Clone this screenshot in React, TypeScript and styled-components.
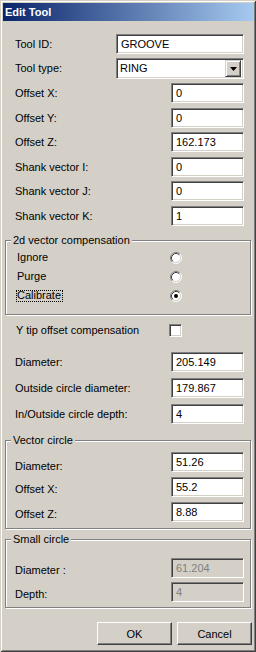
import React from 'react';
import styled, { createGlobalStyle } from 'styled-components';

const GlobalStyle = createGlobalStyle`
  html, body {
    margin: 0;
    padding: 0;
    background: #d4d0c8;
  }
  body {
    font-family: "Liberation Sans", Arial, sans-serif;
    font-size: 11px;
    line-height: 13px;
    color: #000;
  }
`;

const Window = styled.div`
  width: 256px;
  height: 652px;
  box-sizing: border-box;
  padding: 3px 2px 2px 3px;
  background: #d4d0c8;
  box-shadow: inset 1px 1px #d4d0c8, inset -1px -1px #404040, inset 2px 2px #fff,
    inset -2px -2px #808080;
  display: flex;
  flex-direction: column;
`;

const TitleBar = styled.div`
  height: 18px;
  padding-left: 2px;
  display: flex;
  align-items: center;
  background: linear-gradient(to right, #0a246a, #a6caf0);
  color: #fff;
  font-weight: bold;
  font-size: 11px;
`;

const Body = styled.div`
  display: flex;
  flex-direction: column;
  padding: 0 2px;
`;

const Row = styled.div<{ $mt: number; $h?: number; $pl?: number; $pr?: number }>`
  display: flex;
  align-items: center;
  justify-content: space-between;
  margin-top: ${p => p.$mt}px;
  height: ${p => p.$h ?? 20}px;
  padding: 0 ${p => p.$pr ?? 8}px 0 ${p => p.$pl ?? 10}px;
`;

const Label = styled.span<{ $drop?: number }>`
  padding-top: ${p => (p.$drop ?? 0) * 2}px;
  white-space: nowrap;
`;

const Edit = styled.input<{ $w?: number }>`
  box-sizing: border-box;
  width: ${p => p.$w ?? 73}px;
  height: 20px;
  margin: 0;
  padding: 0 0 0 4px;
  border: 1px solid;
  border-color: #808080 #fff #fff #808080;
  box-shadow: inset 1px 1px #404040, inset -1px -1px #d4d0c8;
  background: #fff;
  font: 11px "Liberation Sans", Arial, sans-serif;
  color: #000;
  outline: none;

  &:disabled {
    background: #d4d0c8;
    color: #808080;
    -webkit-text-fill-color: #808080;
    opacity: 1;
  }
`;

const Combo = styled.div`
  box-sizing: border-box;
  width: 128px;
  height: 21px;
  display: flex;
  align-items: center;
  justify-content: space-between;
  padding: 0 2px 0 3px;
  border: 1px solid;
  border-color: #808080 #fff #fff #808080;
  box-shadow: inset 1px 1px #404040, inset -1px -1px #d4d0c8;
  background: #fff;
`;

const DropButton = styled.div`
  box-sizing: border-box;
  width: 16px;
  height: 17px;
  display: flex;
  align-items: center;
  justify-content: center;
  background: #d4d0c8;
  border: 1px solid;
  border-color: #d4d0c8 #404040 #404040 #d4d0c8;
  box-shadow: inset 1px 1px #fff, inset -1px -1px #808080;
`;

const Group = styled.div<{ $mt: number; $pt: number; $pb: number }>`
  position: relative;
  margin: ${p => p.$mt}px 1px 0 0;
  padding: ${p => p.$pt}px 0 ${p => p.$pb}px;
  border: 1px solid #808080;
  box-shadow: inset 1px 1px #fff, 1px 1px #fff;
  display: flex;
  flex-direction: column;
`;

const Legend = styled.span`
  position: absolute;
  top: -7px;
  left: 5px;
  padding: 0 2px;
  background: #d4d0c8;
  line-height: 13px;
`;

const OptionRow = styled.div<{ $mt?: number; $h: number; $box: number }>`
  display: grid;
  grid-template-columns: 153px ${p => p.$box}px;
  align-items: center;
  height: ${p => p.$h}px;
  margin-top: ${p => p.$mt ?? 0}px;
  padding-left: 11px;
`;

const OptionLabel = styled.span<{ $focus?: boolean }>`
  justify-self: start;
  display: flex;
  align-items: center;
  height: 10px;
  margin-left: -1px;
  padding-right: 1px;
  border: 1px ${p => (p.$focus ? 'dotted #000' : 'solid transparent')};
  white-space: nowrap;
`;

const CheckBox = styled.div`
  box-sizing: border-box;
  width: 13px;
  height: 13px;
  border: 1px solid;
  border-color: #808080 #fff #fff #808080;
  box-shadow: inset 1px 1px #404040, inset -1px -1px #d4d0c8;
  background: #fff;
`;

const ButtonBar = styled.div`
  display: flex;
  justify-content: flex-end;
  gap: 5px;
  margin-top: 14px;
`;

const PushButton = styled.button`
  box-sizing: border-box;
  width: 75px;
  height: 23px;
  margin: 0;
  padding: 0;
  background: #d4d0c8;
  border: 1px solid;
  border-color: #fff #404040 #404040 #fff;
  box-shadow: inset -1px -1px #808080, inset 1px 1px #d4d0c8;
  font: 11px "Liberation Sans", Arial, sans-serif;
  color: #000;
`;

const Radio: React.FC<{ checked?: boolean }> = ({ checked }) => (
  <svg width="12" height="12" viewBox="0 0 12 12">
    <circle cx="6" cy="6" r="5" fill="#fff" />
    <path d="M2.11 9.89 A5.5 5.5 0 0 1 9.89 2.11" fill="none" stroke="#808080" />
    <path d="M9.89 2.11 A5.5 5.5 0 0 1 2.11 9.89" fill="none" stroke="#fff" />
    <path d="M2.82 9.18 A4.5 4.5 0 0 1 9.18 2.82" fill="none" stroke="#404040" />
    <path d="M9.18 2.82 A4.5 4.5 0 0 1 2.82 9.18" fill="none" stroke="#d4d0c8" />
    {checked && <circle cx="6" cy="6" r="2" fill="#000" />}
  </svg>
);

const Arrow = () => (
  <svg width="7" height="4" viewBox="0 0 7 4">
    <path d="M0 0 H7 L3.5 4 Z" fill="#000" />
  </svg>
);

export default function App() {
  return (
    <>
      <GlobalStyle />
      <Window>
        <TitleBar>Edit Tool</TitleBar>
        <Body>
          <Row $mt={13}>
            <Label>Tool ID:</Label>
            <Edit $w={128} defaultValue="GROOVE" readOnly />
          </Row>
          <Row $mt={4} $h={21}>
            <Label>Tool type:</Label>
            <Combo>
              <span>RING</span>
              <DropButton>
                <Arrow />
              </DropButton>
            </Combo>
          </Row>
          <Row $mt={4}>
            <Label>Offset X:</Label>
            <Edit defaultValue="0" readOnly />
          </Row>
          <Row $mt={5}>
            <Label>Offset Y:</Label>
            <Edit defaultValue="0" readOnly />
          </Row>
          <Row $mt={4}>
            <Label>Offset Z:</Label>
            <Edit defaultValue="162.173" readOnly />
          </Row>
          <Row $mt={5}>
            <Label>Shank vector I:</Label>
            <Edit defaultValue="0" readOnly />
          </Row>
          <Row $mt={4}>
            <Label>Shank vector J:</Label>
            <Edit defaultValue="0" readOnly />
          </Row>
          <Row $mt={5}>
            <Label>Shank vector K:</Label>
            <Edit defaultValue="1" readOnly />
          </Row>

          <Group $mt={14} $pt={7} $pb={9}>
            <Legend>2d vector compensation</Legend>
            <OptionRow $h={19} $box={12}>
              <OptionLabel>Ignore</OptionLabel>
              <Radio />
            </OptionRow>
            <OptionRow $h={19} $box={12}>
              <OptionLabel>Purge</OptionLabel>
              <Radio />
            </OptionRow>
            <OptionRow $h={19} $box={12}>
              <OptionLabel $focus>Calibrate</OptionLabel>
              <Radio checked />
            </OptionRow>
          </Group>

          <OptionRow $mt={9} $h={13} $box={13}>
            <OptionLabel>Y tip offset compensation</OptionLabel>
            <CheckBox />
          </OptionRow>

          <Row $mt={15}>
            <Label>Diameter:</Label>
            <Edit defaultValue="205.149" readOnly />
          </Row>
          <Row $mt={6}>
            <Label>Outside circle diameter:</Label>
            <Edit defaultValue="179.867" readOnly />
          </Row>
          <Row $mt={6}>
            <Label>In/Outside circle depth:</Label>
            <Edit defaultValue="4" readOnly />
          </Row>

          <Group $mt={16} $pt={11} $pb={6}>
            <Legend>Vector circle</Legend>
            <Row $mt={0} $pl={9} $pr={6}>
              <Label $drop={4}>Diameter:</Label>
              <Edit defaultValue="51.26" readOnly />
            </Row>
            <Row $mt={5} $pl={9} $pr={6}>
              <Label $drop={2}>Offset X:</Label>
              <Edit defaultValue="55.2" readOnly />
            </Row>
            <Row $mt={5} $pl={9} $pr={6}>
              <Label $drop={2}>Offset Z:</Label>
              <Edit defaultValue="8.88" readOnly />
            </Row>
          </Group>

          <Group $mt={10} $pt={18} $pb={5}>
            <Legend>Small circle</Legend>
            <Row $mt={0} $pl={9} $pr={6}>
              <Label $drop={2}>Diameter :</Label>
              <Edit defaultValue="61.204" disabled />
            </Row>
            <Row $mt={4} $pl={9} $pr={6}>
              <Label $drop={2}>Depth:</Label>
              <Edit defaultValue="4" disabled />
            </Row>
          </Group>

          <ButtonBar>
            <PushButton>OK</PushButton>
            <PushButton>Cancel</PushButton>
          </ButtonBar>
        </Body>
      </Window>
    </>
  );
}
